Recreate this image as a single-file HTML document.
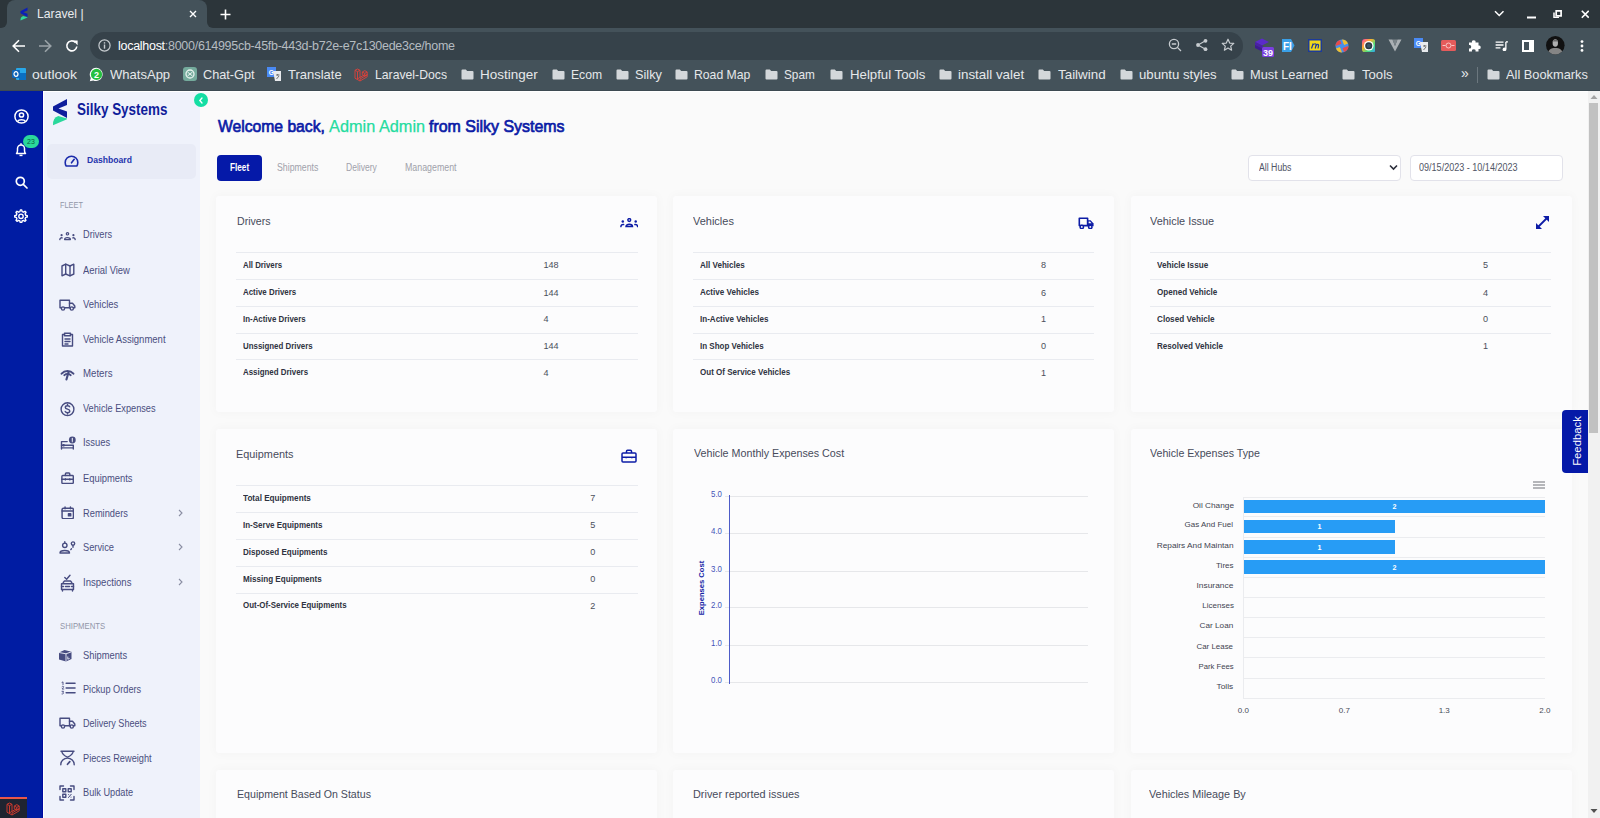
<!DOCTYPE html>
<html><head><meta charset="utf-8">
<style>
*{box-sizing:border-box;margin:0;padding:0}
html,body{width:1600px;height:818px;overflow:hidden;font-family:"Liberation Sans",sans-serif;background:#fafafa;position:relative}
.abs{position:absolute}
#tabs{position:absolute;left:0;top:0;width:1600px;height:28px;background:#2c353a}
#tab{position:absolute;left:7px;top:0;width:200px;height:28px;background:#44525a;border-radius:8px 8px 0 0}
#toolbar{position:absolute;left:0;top:28px;width:1600px;height:62px;background:#44525a}
#pill{position:absolute;left:90px;top:32px;width:1153px;height:28px;background:#36424a;border-radius:14px}
.ct{color:#e8eaed;font-size:13px;white-space:nowrap}
</style></head><body>
<div id="tabs"></div>
<div id="tab"></div><div class="abs" style="left:0;top:20px;width:215px;height:8px;background:#44525a"></div><div class="abs" style="left:0;top:0;width:7px;height:28px;background:#2c353a;border-bottom-right-radius:6px"></div><div class="abs" style="left:207px;top:0;width:10px;height:28px;background:#2c353a;border-bottom-left-radius:6px"></div><div id="tab2"></div>
<div id="toolbar"></div>
<div id="pill"></div>
<!-- tab content -->
<svg class="abs" style="left:19.5px;top:7px" width="8" height="14" viewBox="0 0 16 28"><path d="M15 1V7L6.5 10.5L15 13.6V20L1 12.4V8.6Z" fill="#0b1fb8"/><path d="M1 27.2Q0.6 20 6.3 18.1L15 20.6V21.2Z" fill="#2fd89d"/></svg>
<div class="abs ct" style="left:37px;top:6px;font-size:13px;color:#e8eaed;transform:scaleX(0.94);transform-origin:0 50%">Laravel |</div>
<svg class="abs" style="left:189px;top:10px" width="8" height="8" viewBox="0 0 8 8"><path d="M1 1L7 7M7 1L1 7" stroke="#fff" stroke-width="1.4"/></svg>
<svg class="abs" style="left:220px;top:9px" width="11" height="11" viewBox="0 0 11 11"><path d="M5.5 0.5V10.5M0.5 5.5H10.5" stroke="#fff" stroke-width="1.6"/></svg>
<!-- window controls -->
<svg class="abs" style="left:1494px;top:10px" width="10.5" height="7" viewBox="0 0 10.5 7"><path d="M1 1.2L5.25 5.5L9.5 1.2" stroke="#fff" stroke-width="1.5" fill="none"/></svg>
<svg class="abs" style="left:1526.5px;top:15.5px" width="9" height="3" viewBox="0 0 9 3"><path d="M0 1.5H9" stroke="#fff" stroke-width="2"/></svg>
<svg class="abs" style="left:1553px;top:9.8px" width="9" height="8.5" viewBox="0 0 9 8.5"><path d="M3.2 0.9H8.1V5.8H3.2Z" stroke="#fff" stroke-width="1.7" fill="#2c353a"/><path d="M1 2.5V7.5H6" stroke="#fff" stroke-width="1.5" fill="none"/></svg>
<svg class="abs" style="left:1580.5px;top:10px" width="8.5" height="8.5" viewBox="0 0 8.5 8.5"><path d="M0.8 0.8L7.7 7.7M7.7 0.8L0.8 7.7" stroke="#fff" stroke-width="1.6"/></svg>
<!-- nav -->
<svg class="abs" style="left:11.5px;top:39px" width="14" height="14" viewBox="0 0 14 14"><path d="M13 7H1.5M7 1.2L1.2 7L7 12.8" stroke="#fff" stroke-width="1.6" fill="none"/></svg>
<svg class="abs" style="left:37.5px;top:39px" width="14" height="14" viewBox="0 0 14 14"><path d="M1 7H12.5M7 1.2L12.8 7L7 12.8" stroke="#9aa3a8" stroke-width="1.6" fill="none"/></svg>
<svg class="abs" style="left:65px;top:39px" width="14" height="14" viewBox="0 0 14 14"><path d="M11.8 7.5A5 5 0 1 1 10.3 3.3" stroke="#fff" stroke-width="1.6" fill="none"/><path d="M8 1.5H12.6V6.2Z" fill="#fff"/></svg>
<svg class="abs" style="left:98px;top:39px" width="13" height="13" viewBox="0 0 13 13"><circle cx="6.5" cy="6.5" r="5.6" stroke="#c7ccd0" stroke-width="1.2" fill="none"/><rect x="5.8" y="5.5" width="1.4" height="4.2" fill="#c7ccd0"/><rect x="5.8" y="3.2" width="1.4" height="1.4" fill="#c7ccd0"/></svg>
<div class="abs ct" style="left:118px;top:38.5px;font-size:12.5px;letter-spacing:-0.28px"><span style="color:#fff">localhost</span><span style="color:#b5bcc1">:8000/614995cb-45fb-443d-b72e-e7c130ede3ce/home</span></div>
<!-- right of pill -->
<svg class="abs" style="left:1168px;top:38px" width="14" height="14" viewBox="0 0 14 14"><circle cx="6" cy="6" r="4.6" stroke="#c7ccd0" stroke-width="1.3" fill="none"/><path d="M3.8 6H8.2M9.4 9.4L13 13" stroke="#c7ccd0" stroke-width="1.3"/></svg>
<svg class="abs" style="left:1195px;top:38px" width="14" height="14" viewBox="0 0 14 14"><circle cx="10.5" cy="2.8" r="1.9" fill="#c7ccd0"/><circle cx="3" cy="7" r="1.9" fill="#c7ccd0"/><circle cx="10.5" cy="11.2" r="1.9" fill="#c7ccd0"/><path d="M10.5 2.8L3 7L10.5 11.2" stroke="#c7ccd0" stroke-width="1.1" fill="none"/></svg>
<svg class="abs" style="left:1221px;top:38px" width="14" height="14" viewBox="0 0 14 14"><path d="M7 1.2L8.7 5.1L12.8 5.4L9.7 8.1L10.6 12.2L7 10L3.4 12.2L4.3 8.1L1.2 5.4L5.3 5.1Z" stroke="#c7ccd0" stroke-width="1.2" fill="none" stroke-linejoin="round"/></svg>
<!-- extensions -->
<svg class="abs" style="left:1253px;top:36px" width="22" height="22" viewBox="0 0 22 22"><path d="M2 6L9 2.5L16 6L9 9.5Z" fill="#5b2bc9"/><path d="M2 9L9 12.5L10 12V10L2 6Z" fill="#4a1fa8"/><path d="M2 9V12L9 15.5V12.5Z" fill="#3d1a92"/><rect x="9" y="11" width="12" height="10" rx="1.5" fill="#7a3fe0"/><text x="15" y="19.5" font-size="9" fill="#fff" text-anchor="middle" font-family="Liberation Sans" font-weight="bold">39</text></svg>
<svg class="abs" style="left:1281px;top:38px" width="14" height="15" viewBox="0 0 14 15"><path d="M1 1H10L13.5 7.5L10 14H1Z" fill="#3aa0e8"/><text x="2" y="11.5" font-size="10" fill="#fff" font-family="Liberation Sans" font-weight="bold">FI</text></svg>
<svg class="abs" style="left:1308px;top:39px" width="14" height="13" viewBox="0 0 14 13"><rect x="0" y="0" width="14" height="13" fill="#1c3a9a"/><rect x="1.5" y="1.5" width="11" height="10" fill="#f2d91a"/><path d="M3.5 9.5L5.2 4.5M5 6C6 4.5 8.5 4 8 6.5L7.2 9.5M8.4 6.4C9 5 11 4.8 10.5 7L10 9.5" stroke="#1c3a9a" stroke-width="1.2" fill="none"/></svg>
<svg class="abs" style="left:1335px;top:38.5px" width="14" height="14" viewBox="0 0 14 14"><circle cx="7" cy="7" r="6.5" fill="#4a8ee8"/><path d="M7 0.5A6.5 6.5 0 0 1 13 4.5L9 6Z" fill="#f0c030"/><path d="M13.5 7A6.5 6.5 0 0 1 9 13L7.5 9Z" fill="#e84a4a"/><path d="M7 13.5A6.5 6.5 0 0 1 1 9.5L5 8Z" fill="#f0c030"/><path d="M0.5 7A6.5 6.5 0 0 1 5 1L6.5 5Z" fill="#e84a4a"/><circle cx="7" cy="7" r="2.2" fill="#4a8ee8"/></svg>
<svg class="abs" style="left:1361.5px;top:38.8px" width="13.5" height="13.5" viewBox="0 0 14 14"><defs><linearGradient id="rg" x1="0" y1="0" x2="1" y2="1"><stop offset="0" stop-color="#ff3fb0"/><stop offset="0.35" stop-color="#ffb02e"/><stop offset="0.65" stop-color="#4be07a"/><stop offset="1" stop-color="#2f9bff"/></linearGradient></defs><rect x="0" y="0" width="14" height="14" rx="3.5" fill="url(#rg)"/><circle cx="7" cy="7" r="5" fill="#fff"/><circle cx="7" cy="7" r="3.7" fill="#2d3a44"/><circle cx="7" cy="7" r="2" fill="#3c5566"/></svg>
<svg class="abs" style="left:1388px;top:39px" width="14" height="13" viewBox="0 0 14 13"><path d="M0.5 0.5H4.5L7 7L9.5 0.5H13.5L7 12.5Z" fill="#aab0b4"/><path d="M4.5 0.5L7 7L9.5 0.5" fill="#7c858a"/></svg>
<svg class="abs" style="left:1414px;top:38px" width="15" height="15" viewBox="0 0 15 15"><rect x="0" y="0" width="9" height="10" fill="#4a8af4"/><text x="1.8" y="7.5" font-size="6.5" fill="#fff" font-family="Liberation Sans" font-weight="bold">G</text><path d="M6 4H14V14H8Z" fill="#e8eaed"/><path d="M9 8H12.5M10.7 7V8.5M9.5 12L12 9" stroke="#555" stroke-width="0.8"/></svg>
<svg class="abs" style="left:1441px;top:40px" width="15" height="11" viewBox="0 0 15 11"><rect x="0" y="0" width="15" height="11" rx="1.5" fill="#e55b5b"/><circle cx="7.5" cy="5.5" r="2.5" stroke="#fbd0d0" stroke-width="0.9" fill="none"/><path d="M1.5 5.5H4.5M10.5 5.5H13.5" stroke="#fbd0d0" stroke-width="0.9"/></svg>
<svg class="abs" style="left:1468px;top:38px" width="14" height="14" viewBox="0 0 14 14"><path d="M1 4.5H4A1.8 1.8 0 1 1 7.5 4.5H10.5V7.5A1.8 1.8 0 1 1 10.5 11V13.5H7.5A1.8 1.8 0 1 0 4 13.5H1V10.5A1.8 1.8 0 1 0 1 7Z" fill="#fff"/></svg>
<svg class="abs" style="left:1495px;top:40.5px" width="13.5" height="10.5" viewBox="0 0 15 12"><path d="M0.5 1.3H9.5M0.5 4.6H9.5M0.5 7.9H6" stroke="#fff" stroke-width="1.6"/><path d="M12.2 1V9.5" stroke="#fff" stroke-width="1.5"/><path d="M12.2 1H14.5" stroke="#fff" stroke-width="1.6"/><circle cx="10.6" cy="9.6" r="2.1" fill="#fff"/></svg>
<svg class="abs" style="left:1522px;top:39.6px" width="12" height="12" viewBox="0 0 12 12"><rect x="1" y="1" width="10" height="10" stroke="#fff" stroke-width="2" fill="none"/><rect x="7" y="1" width="4" height="10" fill="#fff"/></svg>
<svg class="abs" style="left:1546px;top:36.2px" width="18.6" height="18.6" viewBox="0 0 20 20"><defs><clipPath id="avc"><circle cx="10" cy="10" r="10"/></clipPath></defs><circle cx="10" cy="10" r="10" fill="#111"/><g clip-path="url(#avc)"><path d="M1.5 21C2 14.5 5 12.8 10 12.8C15 12.8 18 14.5 18.5 21Z" fill="#858585"/><ellipse cx="10" cy="7.6" rx="2.9" ry="4" fill="#b0b0b0"/><path d="M7.1 6C7.3 3.2 12.7 3.2 12.9 6" fill="#6a6a6a"/></g></svg>
<svg class="abs" style="left:1580px;top:40px" width="4" height="12" viewBox="0 0 4 12"><circle cx="2" cy="1.6" r="1.4" fill="#fff"/><circle cx="2" cy="6" r="1.4" fill="#fff"/><circle cx="2" cy="10.4" r="1.4" fill="#fff"/></svg>
<!-- bookmarks -->
<svg class="abs" style="left:12px;top:67px" width="14" height="14" viewBox="0 0 14 14"><rect x="4" y="1" width="10" height="12" rx="1" fill="#28a8ea"/><rect x="7" y="6" width="7" height="7" fill="#0a6fc2"/><rect x="0" y="3" width="8" height="8" rx="1" fill="#0f64b8"/><ellipse cx="4" cy="7" rx="2" ry="2.3" stroke="#fff" stroke-width="1.2" fill="none"/></svg><svg class="abs" style="left:89px;top:67px" width="15" height="15" viewBox="0 0 15 15"><path d="M7.5 0.8A6.6 6.6 0 1 1 4.3 13.4L0.8 14.2L1.8 10.9A6.6 6.6 0 0 1 7.5 0.8Z" fill="#fff"/><circle cx="7.5" cy="7.4" r="5.6" fill="#25c040"/><text x="7.5" y="10.6" font-size="9" fill="#fff" text-anchor="middle" font-family="Liberation Sans" font-weight="bold">2</text></svg><svg class="abs" style="left:183px;top:67px" width="14" height="14" viewBox="0 0 14 14"><rect x="0" y="0" width="14" height="14" rx="3" fill="#74aa9c"/><circle cx="7" cy="7" r="4" stroke="#e8f3ef" stroke-width="1.3" fill="none"/><path d="M4.5 5L9.5 9M9.5 5L4.5 9" stroke="#e8f3ef" stroke-width="1"/></svg><svg class="abs" style="left:267px;top:67px" width="15" height="15" viewBox="0 0 15 15"><rect x="0" y="0" width="9" height="10" fill="#4a8af4"/><text x="1.8" y="7.5" font-size="6.5" fill="#fff" font-family="Liberation Sans" font-weight="bold">G</text><path d="M6 4H14V14H8Z" fill="#e8eaed"/><path d="M9 8H12.5M10.7 7V8.5M9.5 12L12 9" stroke="#555" stroke-width="0.8"/></svg><svg class="abs" style="left:354px;top:68px" width="14" height="14" viewBox="0 0 14 14"><g stroke="#e0413a" stroke-width="0.9" fill="none" stroke-linejoin="round"><path d="M1 2.3L3.5 1L6 2.3L3.5 3.6Z"/><path d="M1 2.3V10.2L6 13L13.2 8.8V6.2"/><path d="M3.5 3.6V11.6"/><path d="M6 2.3V9.4L3.5 10.8M6 9.4L10.8 6.6"/><path d="M8.3 4L10.8 2.6L13.2 4L10.8 5.4Z"/><path d="M8.3 4V6.7L10.8 8.1L13.2 6.7V4M10.8 5.4V8.1M6 13V11L13.2 6.8"/></g></svg><svg class="abs" style="left:461px;top:69px" width="13" height="11" viewBox="0 0 13 11"><path d="M0.5 1.5Q0.5 0.5 1.5 0.5H4.8L6.2 2H11.5Q12.5 2 12.5 3V9.5Q12.5 10.5 11.5 10.5H1.5Q0.5 10.5 0.5 9.5Z" fill="#d3d7da"/></svg><svg class="abs" style="left:552px;top:69px" width="13" height="11" viewBox="0 0 13 11"><path d="M0.5 1.5Q0.5 0.5 1.5 0.5H4.8L6.2 2H11.5Q12.5 2 12.5 3V9.5Q12.5 10.5 11.5 10.5H1.5Q0.5 10.5 0.5 9.5Z" fill="#d3d7da"/></svg><svg class="abs" style="left:616px;top:69px" width="13" height="11" viewBox="0 0 13 11"><path d="M0.5 1.5Q0.5 0.5 1.5 0.5H4.8L6.2 2H11.5Q12.5 2 12.5 3V9.5Q12.5 10.5 11.5 10.5H1.5Q0.5 10.5 0.5 9.5Z" fill="#d3d7da"/></svg><svg class="abs" style="left:675px;top:69px" width="13" height="11" viewBox="0 0 13 11"><path d="M0.5 1.5Q0.5 0.5 1.5 0.5H4.8L6.2 2H11.5Q12.5 2 12.5 3V9.5Q12.5 10.5 11.5 10.5H1.5Q0.5 10.5 0.5 9.5Z" fill="#d3d7da"/></svg><svg class="abs" style="left:765px;top:69px" width="13" height="11" viewBox="0 0 13 11"><path d="M0.5 1.5Q0.5 0.5 1.5 0.5H4.8L6.2 2H11.5Q12.5 2 12.5 3V9.5Q12.5 10.5 11.5 10.5H1.5Q0.5 10.5 0.5 9.5Z" fill="#d3d7da"/></svg><svg class="abs" style="left:830px;top:69px" width="13" height="11" viewBox="0 0 13 11"><path d="M0.5 1.5Q0.5 0.5 1.5 0.5H4.8L6.2 2H11.5Q12.5 2 12.5 3V9.5Q12.5 10.5 11.5 10.5H1.5Q0.5 10.5 0.5 9.5Z" fill="#d3d7da"/></svg><svg class="abs" style="left:939px;top:69px" width="13" height="11" viewBox="0 0 13 11"><path d="M0.5 1.5Q0.5 0.5 1.5 0.5H4.8L6.2 2H11.5Q12.5 2 12.5 3V9.5Q12.5 10.5 11.5 10.5H1.5Q0.5 10.5 0.5 9.5Z" fill="#d3d7da"/></svg><svg class="abs" style="left:1038px;top:69px" width="13" height="11" viewBox="0 0 13 11"><path d="M0.5 1.5Q0.5 0.5 1.5 0.5H4.8L6.2 2H11.5Q12.5 2 12.5 3V9.5Q12.5 10.5 11.5 10.5H1.5Q0.5 10.5 0.5 9.5Z" fill="#d3d7da"/></svg><svg class="abs" style="left:1120px;top:69px" width="13" height="11" viewBox="0 0 13 11"><path d="M0.5 1.5Q0.5 0.5 1.5 0.5H4.8L6.2 2H11.5Q12.5 2 12.5 3V9.5Q12.5 10.5 11.5 10.5H1.5Q0.5 10.5 0.5 9.5Z" fill="#d3d7da"/></svg><svg class="abs" style="left:1231px;top:69px" width="13" height="11" viewBox="0 0 13 11"><path d="M0.5 1.5Q0.5 0.5 1.5 0.5H4.8L6.2 2H11.5Q12.5 2 12.5 3V9.5Q12.5 10.5 11.5 10.5H1.5Q0.5 10.5 0.5 9.5Z" fill="#d3d7da"/></svg><svg class="abs" style="left:1342px;top:69px" width="13" height="11" viewBox="0 0 13 11"><path d="M0.5 1.5Q0.5 0.5 1.5 0.5H4.8L6.2 2H11.5Q12.5 2 12.5 3V9.5Q12.5 10.5 11.5 10.5H1.5Q0.5 10.5 0.5 9.5Z" fill="#d3d7da"/></svg><svg class="abs" style="left:1487px;top:69px" width="13" height="11" viewBox="0 0 13 11"><path d="M0.5 1.5Q0.5 0.5 1.5 0.5H4.8L6.2 2H11.5Q12.5 2 12.5 3V9.5Q12.5 10.5 11.5 10.5H1.5Q0.5 10.5 0.5 9.5Z" fill="#d3d7da"/></svg><div class="abs ct" style="left:1461px;top:65px;font-size:14px">&raquo;</div><div class="abs" style="left:1477px;top:67px;width:1px;height:16px;background:#6b777e"></div>

<div id="t0" style="position:absolute;left:32.00px;transform-origin:0 50%;top:69.17px;font-size:12.4px;line-height:12.4px;color:#e6e8ea;font-weight:normal;white-space:nowrap;transform:scaleX(1.1278);">outlook</div>
<div id="t1" style="position:absolute;left:110.00px;transform-origin:0 50%;top:69.17px;font-size:12.4px;line-height:12.4px;color:#e6e8ea;font-weight:normal;white-space:nowrap;transform:scaleX(1.0518);">WhatsApp</div>
<div id="t2" style="position:absolute;left:203.00px;transform-origin:0 50%;top:69.17px;font-size:12.4px;line-height:12.4px;color:#e6e8ea;font-weight:normal;white-space:nowrap;transform:scaleX(1.0265);">Chat-Gpt</div>
<div id="t3" style="position:absolute;left:287.50px;transform-origin:0 50%;top:69.17px;font-size:12.4px;line-height:12.4px;color:#e6e8ea;font-weight:normal;white-space:nowrap;transform:scaleX(1.0474);">Translate</div>
<div id="t4" style="position:absolute;left:374.60px;transform-origin:0 50%;top:69.17px;font-size:12.4px;line-height:12.4px;color:#e6e8ea;font-weight:normal;white-space:nowrap;transform:scaleX(0.9862);">Laravel-Docs</div>
<div id="t5" style="position:absolute;left:480.00px;transform-origin:0 50%;top:69.17px;font-size:12.4px;line-height:12.4px;color:#e6e8ea;font-weight:normal;white-space:nowrap;transform:scaleX(1.0871);">Hostinger</div>
<div id="t6" style="position:absolute;left:570.75px;transform-origin:0 50%;top:69.17px;font-size:12.4px;line-height:12.4px;color:#e6e8ea;font-weight:normal;white-space:nowrap;transform:scaleX(0.9811);">Ecom</div>
<div id="t7" style="position:absolute;left:635.00px;transform-origin:0 50%;top:69.17px;font-size:12.4px;line-height:12.4px;color:#e6e8ea;font-weight:normal;white-space:nowrap;transform:scaleX(1.0265);">Silky</div>
<div id="t8" style="position:absolute;left:694.25px;transform-origin:0 50%;top:69.17px;font-size:12.4px;line-height:12.4px;color:#e6e8ea;font-weight:normal;white-space:nowrap;transform:scaleX(0.9855);">Road Map</div>
<div id="t9" style="position:absolute;left:783.75px;transform-origin:0 50%;top:69.17px;font-size:12.4px;line-height:12.4px;color:#e6e8ea;font-weight:normal;white-space:nowrap;transform:scaleX(0.9520);">Spam</div>
<div id="t10" style="position:absolute;left:849.50px;transform-origin:0 50%;top:69.17px;font-size:12.4px;line-height:12.4px;color:#e6e8ea;font-weight:normal;white-space:nowrap;transform:scaleX(1.0660);">Helpful Tools</div>
<div id="t11" style="position:absolute;left:958.25px;transform-origin:0 50%;top:69.17px;font-size:12.4px;line-height:12.4px;color:#e6e8ea;font-weight:normal;white-space:nowrap;transform:scaleX(1.0791);">install valet</div>
<div id="t12" style="position:absolute;left:1058.00px;transform-origin:0 50%;top:69.17px;font-size:12.4px;line-height:12.4px;color:#e6e8ea;font-weight:normal;white-space:nowrap;transform:scaleX(1.0810);">Tailwind</div>
<div id="t13" style="position:absolute;left:1139.25px;transform-origin:0 50%;top:69.17px;font-size:12.4px;line-height:12.4px;color:#e6e8ea;font-weight:normal;white-space:nowrap;transform:scaleX(1.0633);">ubuntu styles</div>
<div id="t14" style="position:absolute;left:1250.00px;transform-origin:0 50%;top:69.17px;font-size:12.4px;line-height:12.4px;color:#e6e8ea;font-weight:normal;white-space:nowrap;transform:scaleX(1.0311);">Must Learned</div>
<div id="t15" style="position:absolute;left:1362.00px;transform-origin:0 50%;top:69.17px;font-size:12.4px;line-height:12.4px;color:#e6e8ea;font-weight:normal;white-space:nowrap;transform:scaleX(1.0587);">Tools</div>
<div id="t16" style="position:absolute;left:1506.25px;transform-origin:0 50%;top:69.17px;font-size:12.4px;line-height:12.4px;color:#e6e8ea;font-weight:normal;white-space:nowrap;transform:scaleX(1.0339);">All Bookmarks</div>
<div style="position:absolute;left:0;top:90px;width:1600px;height:1px;background:#3d4a52"></div>
<div style="position:absolute;left:0;top:91px;width:1600px;height:727px;background:#fafafa"></div>
<div style="position:absolute;left:0;top:91px;width:1600px;height:1px;background:#ffffff"></div>
<div style="position:absolute;left:0;top:91px;width:42.5px;height:727px;background:#001ca3;border-right:1px solid #0009a0"></div>
<div style="position:absolute;left:42.5px;top:91px;width:0.5px;height:727px;background:#8f97dc"></div>
<div style="position:absolute;left:43px;top:91px;width:1.2px;height:727px;background:#ffffff"></div>
<div style="position:absolute;left:44px;top:92px;width:156px;height:726px;background:#eff2fb"></div>
<svg style="position:absolute;left:14px;top:109px" width="15" height="15" viewBox="0 0 15 15" fill="none" stroke="#ffffff" stroke-width="1.5"><circle cx="7.5" cy="7.5" r="6.6"/><circle cx="7.5" cy="6" r="2.1"/><path d="M3.6 12.3C4.8 10.2 10.2 10.2 11.4 12.3"/></svg>
<svg style="position:absolute;left:14px;top:142px" width="14" height="15" viewBox="0 0 14 15" fill="none" stroke="#ffffff" stroke-width="1.5" stroke-linejoin="round"><path d="M7 1.2V2.3M2.5 11.5H11.5C10.6 10.6 10.5 9.5 10.5 8.5V6.5A3.5 3.5 0 0 0 3.5 6.5V8.5C3.5 9.5 3.4 10.6 2.5 11.5Z"/><path d="M5.5 13.4H8.5"/></svg>
<div style="position:absolute;left:23px;top:135px;width:16px;height:13px;border-radius:7px;background:#2ad89b"></div>
<div id="t17" style="position:absolute;left:-69.00px;width:200px;text-align:center;top:137.98px;font-size:7px;line-height:7px;color:#0c5c42;font-weight:normal;white-space:nowrap;">23</div>
<svg style="position:absolute;left:15px;top:176px" width="13" height="13" viewBox="0 0 13 13" fill="none" stroke="#ffffff" stroke-width="1.7" stroke-linecap="round"><circle cx="5.3" cy="5.3" r="4"/><path d="M8.3 8.3L12 12"/></svg>
<svg style="position:absolute;left:14px;top:209px" width="14" height="14" viewBox="0 0 14 14" fill="none" stroke="#ffffff" stroke-width="1.4" stroke-linejoin="round"><path d="M7 0.9L8.3 0.9L8.7 2.6L10.1 3.2L11.6 2.3L12.6 3.3L11.7 4.8L12.3 6.2L13.9 6.6V8L12.3 8.4L11.7 9.8L12.6 11.3L11.6 12.3L10.1 11.4L8.7 12L8.3 13.6H6.9L6.5 12L5.1 11.4L3.6 12.3L2.6 11.3L3.5 9.8L2.9 8.4L1.3 8V6.6L2.9 6.2L3.5 4.8L2.6 3.3L3.6 2.3L5.1 3.2L6.5 2.6Z" transform="translate(-0.6 0)"/><circle cx="7" cy="7.3" r="2.2"/></svg>
<div style="position:absolute;left:0;top:796.5px;width:27px;height:22px;background:#1f2430;border-top:2px solid #e8574b"></div>
<svg style="position:absolute;left:6px;top:801.5px" width="14" height="14" viewBox="0 0 14 14"><g stroke="#c8392e" stroke-width="1" fill="none" stroke-linejoin="round"><path d="M1 2.3L3.5 1L6 2.3L3.5 3.6Z"/><path d="M1 2.3V10.2L6 13L13.2 8.8V6.2"/><path d="M3.5 3.6V11.6"/><path d="M6 2.3V9.4L3.5 10.8M6 9.4L10.8 6.6"/><path d="M8.3 4L10.8 2.6L13.2 4L10.8 5.4Z"/><path d="M8.3 4V6.7L10.8 8.1L13.2 6.7V4M10.8 5.4V8.1M6 13V11L13.2 6.8"/></g></svg>
<svg style="position:absolute;left:52px;top:98px" width="16" height="28" viewBox="0 0 16 28"><path d="M15 1V7L6.5 10.5L15 13.6V20L1 12.4V8.6Z" fill="#0e1e9c"/><path d="M1 27.2Q0.6 20 6.3 18.1L15 20.6V21.2Z" fill="#2ad89b"/></svg>
<div id="t18" style="position:absolute;left:77.40px;transform-origin:0 50%;top:100.66px;font-size:16.4px;line-height:16.4px;color:#0f1d9a;font-weight:bold;white-space:nowrap;transform:scaleX(0.8207);">Silky Systems</div>
<div style="position:absolute;left:194px;top:93.3px;width:13.8px;height:13.8px;border-radius:7px;background:#14dea3"></div>
<svg style="position:absolute;left:198px;top:97px" width="6" height="7" viewBox="0 0 6 7"><path d="M4 1L1.8 3.5L4 6" stroke="#fff" stroke-width="1.3" fill="none" stroke-linecap="round"/></svg>
<div style="position:absolute;left:47px;top:144px;width:149px;height:35px;border-radius:5px;background:#e8ebf6"></div>
<svg style="position:absolute;left:64px;top:154px" width="15" height="13" viewBox="0 0 15 13" fill="none" stroke="#1b2bab" stroke-width="1.6" stroke-linecap="round"><path d="M2.2 12H12.8C13.5 11 13.8 9.8 13.8 8.5A6.3 6.3 0 0 0 1.2 8.5C1.2 9.8 1.5 11 2.2 12Z"/><path d="M7.5 8.8L10.2 5.3"/></svg>
<div id="t19" style="position:absolute;left:87.40px;transform-origin:0 50%;top:155.03px;font-size:9.7px;line-height:9.7px;color:#2534ad;font-weight:bold;white-space:nowrap;transform:scaleX(0.8878);">Dashboard</div>
<div id="t20" style="position:absolute;left:59.50px;transform-origin:0 50%;top:200.83px;font-size:8.9px;line-height:8.9px;color:#9196a8;font-weight:normal;white-space:nowrap;transform:scaleX(0.8289);">FLEET</div>
<div id="t21" style="position:absolute;left:59.60px;transform-origin:0 50%;top:621.63px;font-size:8.9px;line-height:8.9px;color:#9196a8;font-weight:normal;white-space:nowrap;transform:scaleX(0.8714);">SHIPMENTS</div>
<div id="t22" style="position:absolute;left:82.80px;transform-origin:0 50%;top:230.47px;font-size:10.2px;line-height:10.2px;color:#4a4e7e;font-weight:normal;white-space:nowrap;transform:scaleX(0.9032);">Drivers</div>
<div id="t23" style="position:absolute;left:82.80px;transform-origin:0 50%;top:265.67px;font-size:10.2px;line-height:10.2px;color:#4a4e7e;font-weight:normal;white-space:nowrap;transform:scaleX(0.9227);">Aerial View</div>
<div id="t24" style="position:absolute;left:82.80px;transform-origin:0 50%;top:299.97px;font-size:10.2px;line-height:10.2px;color:#4a4e7e;font-weight:normal;white-space:nowrap;transform:scaleX(0.9316);">Vehicles</div>
<div id="t25" style="position:absolute;left:82.80px;transform-origin:0 50%;top:334.57px;font-size:10.2px;line-height:10.2px;color:#4a4e7e;font-weight:normal;white-space:nowrap;transform:scaleX(0.9345);">Vehicle Assignment</div>
<div id="t26" style="position:absolute;left:82.80px;transform-origin:0 50%;top:368.87px;font-size:10.2px;line-height:10.2px;color:#4a4e7e;font-weight:normal;white-space:nowrap;transform:scaleX(0.9463);">Meters</div>
<div id="t27" style="position:absolute;left:82.80px;transform-origin:0 50%;top:403.97px;font-size:10.2px;line-height:10.2px;color:#4a4e7e;font-weight:normal;white-space:nowrap;transform:scaleX(0.9020);">Vehicle Expenses</div>
<div id="t28" style="position:absolute;left:82.80px;transform-origin:0 50%;top:437.97px;font-size:10.2px;line-height:10.2px;color:#4a4e7e;font-weight:normal;white-space:nowrap;transform:scaleX(0.9254);">Issues</div>
<div id="t29" style="position:absolute;left:82.80px;transform-origin:0 50%;top:473.57px;font-size:10.2px;line-height:10.2px;color:#4a4e7e;font-weight:normal;white-space:nowrap;transform:scaleX(0.9208);">Equipments</div>
<div id="t30" style="position:absolute;left:82.80px;transform-origin:0 50%;top:508.57px;font-size:10.2px;line-height:10.2px;color:#4a4e7e;font-weight:normal;white-space:nowrap;transform:scaleX(0.9123);">Reminders</div>
<div id="t31" style="position:absolute;left:82.80px;transform-origin:0 50%;top:542.67px;font-size:10.2px;line-height:10.2px;color:#4a4e7e;font-weight:normal;white-space:nowrap;transform:scaleX(0.9106);">Service</div>
<div id="t32" style="position:absolute;left:82.80px;transform-origin:0 50%;top:577.57px;font-size:10.2px;line-height:10.2px;color:#4a4e7e;font-weight:normal;white-space:nowrap;transform:scaleX(0.9402);">Inspections</div>
<div id="t33" style="position:absolute;left:82.80px;transform-origin:0 50%;top:650.67px;font-size:10.2px;line-height:10.2px;color:#4a4e7e;font-weight:normal;white-space:nowrap;transform:scaleX(0.9171);">Shipments</div>
<div id="t34" style="position:absolute;left:82.80px;transform-origin:0 50%;top:684.97px;font-size:10.2px;line-height:10.2px;color:#4a4e7e;font-weight:normal;white-space:nowrap;transform:scaleX(0.9007);">Pickup Orders</div>
<div id="t35" style="position:absolute;left:82.80px;transform-origin:0 50%;top:719.17px;font-size:10.2px;line-height:10.2px;color:#4a4e7e;font-weight:normal;white-space:nowrap;transform:scaleX(0.8920);">Delivery Sheets</div>
<div id="t36" style="position:absolute;left:82.80px;transform-origin:0 50%;top:753.97px;font-size:10.2px;line-height:10.2px;color:#4a4e7e;font-weight:normal;white-space:nowrap;transform:scaleX(0.9045);">Pieces Reweight</div>
<div id="t37" style="position:absolute;left:82.80px;transform-origin:0 50%;top:788.37px;font-size:10.2px;line-height:10.2px;color:#4a4e7e;font-weight:normal;white-space:nowrap;transform:scaleX(0.9016);">Bulk Update</div>
<svg style="position:absolute;left:178px;top:508.9px" width="5" height="8" viewBox="0 0 5 8"><path d="M1 1L4 4L1 7" stroke="#8a8ea3" stroke-width="1.1" fill="none"/></svg>
<svg style="position:absolute;left:178px;top:543.0px" width="5" height="8" viewBox="0 0 5 8"><path d="M1 1L4 4L1 7" stroke="#8a8ea3" stroke-width="1.1" fill="none"/></svg>
<svg style="position:absolute;left:178px;top:577.9px" width="5" height="8" viewBox="0 0 5 8"><path d="M1 1L4 4L1 7" stroke="#8a8ea3" stroke-width="1.1" fill="none"/></svg>
<svg style="position:absolute;left:59px;top:232px" width="17.00" height="8.50" viewBox="0 0 17 8.5" fill="none" stroke="#474c80" stroke-width="1.4" stroke-linecap="round" stroke-linejoin="round"><circle cx="8.5" cy="1.8" r="1.2" stroke-width="1.2"/><path d="M5.6 7.6C5.6 5 11.4 5 11.4 7.6Z" stroke-width="1.3"/><circle cx="2.6" cy="3.2" r="1.1" fill="#474c80" stroke="none"/><circle cx="14.4" cy="3.2" r="1.1" fill="#474c80" stroke="none"/><path d="M0.8 7.6C0.9 6.3 1.7 5.6 3.2 5.8M16.2 7.6C16.1 6.3 15.3 5.6 13.8 5.8" stroke-width="1.3"/></svg>
<svg style="position:absolute;left:61px;top:263px" width="14.00" height="14.00" viewBox="0 0 14 14" fill="none" stroke="#474c80" stroke-width="1.4" stroke-linecap="round" stroke-linejoin="round"><path d="M1 3L4.7 1.2L9 3L12.8 1.2V11L9 12.8L4.7 11L1 12.8Z"/><path d="M4.7 1.2V11M9 3V12.8"/></svg>
<svg style="position:absolute;left:59px;top:299px" width="17.00" height="12.00" viewBox="0 0 17 12" fill="none" stroke="#474c80" stroke-width="1.4" stroke-linecap="round" stroke-linejoin="round"><path d="M1 1.2H10.5V8.8H1Z"/><path d="M10.5 4.2H13.5L15.8 7V8.8H10.5"/><circle cx="4" cy="9.5" r="1.6" fill="#eff2fb"/><circle cx="12.8" cy="9.5" r="1.6" fill="#eff2fb"/></svg>
<svg style="position:absolute;left:60px;top:332px" width="15.00" height="15.00" viewBox="0 0 15 15" fill="none" stroke="#474c80" stroke-width="1.4" stroke-linecap="round" stroke-linejoin="round"><path d="M4.5 2.5H2.5V14H12.5V2.5H10.5"/><path d="M4.5 1.2H10.5V3.8H4.5Z"/><path d="M5 7H10M5 9.5H10M5 12H8"/></svg>
<svg style="position:absolute;left:60px;top:368.5px" width="15" height="12" viewBox="0 0 17 13.5" fill="none" stroke="#474c80" stroke-linecap="round"><path d="M1.8 5.2C5.5 1.2 11.5 1.2 15.2 5.2" stroke-width="2.3"/><path d="M4.8 7C7 5.3 10 5.3 12.2 7" stroke-width="2"/><path d="M9.6 3.8L7.3 11.8" stroke-width="2.4"/></svg>
<svg style="position:absolute;left:60px;top:401px" width="15.00" height="16.00" viewBox="0 0 15 16" fill="none" stroke="#474c80" stroke-width="1.4" stroke-linecap="round" stroke-linejoin="round"><circle cx="7.5" cy="8.2" r="6.4"/><path d="M9.7 5.8C9.3 5 8.5 4.7 7.5 4.7C6.3 4.7 5.3 5.4 5.3 6.4C5.3 8.7 9.8 7.7 9.8 10C9.8 11 8.8 11.7 7.5 11.7C6.4 11.7 5.6 11.3 5.2 10.5M7.5 3.3V4.7M7.5 11.7V13.1"/></svg>
<svg style="position:absolute;left:60px;top:435.5px" width="16.00" height="14.00" viewBox="0 0 16 14" fill="none" stroke="#474c80" stroke-width="1.4" stroke-linecap="round" stroke-linejoin="round"><path d="M1.5 13V5.6H7.2"/><path d="M1.5 9.3H13.3V13M1.5 11.9H13.3"/><circle cx="12.3" cy="4" r="3.4" fill="#474c80" stroke="none"/><path d="M12.3 2.3V4.4M12.3 5.6V5.7" stroke="#eff2fb" stroke-width="1.1"/><circle cx="3.6" cy="9.3" r="0.6" fill="#474c80"/></svg>
<svg style="position:absolute;left:60.5px;top:472px" width="13.20" height="12.32" viewBox="0 0 15 14" fill="none" stroke="#474c80" stroke-width="1.6" stroke-linecap="round" stroke-linejoin="round"><rect x="1" y="4" width="13" height="9" rx="1"/><path d="M5 4V2.2C5 1.5 5.5 1.2 6 1.2H9C9.5 1.2 10 1.5 10 2.2V4M1 8.3H14M5 7.5V9M10 7.5V9"/></svg>
<svg style="position:absolute;left:60.5px;top:505.5px" width="13.50" height="13.50" viewBox="0 0 15 15" fill="none" stroke="#474c80" stroke-width="1.6" stroke-linecap="round" stroke-linejoin="round"><rect x="1.2" y="2.5" width="12.6" height="11.5" rx="1.5"/><path d="M1.2 5.5H13.8M4.5 1V3M10.5 1V3"/><rect x="8.3" y="8.5" width="2.5" height="2.5" fill="#474c80"/></svg>
<svg style="position:absolute;left:59px;top:541px" width="17.00" height="13.00" viewBox="0 0 17 13" fill="none" stroke="#474c80" stroke-width="1.4" stroke-linecap="round" stroke-linejoin="round"><circle cx="5.8" cy="4.3" r="2.2"/><path d="M5.8 0.8V2.1" /><path d="M1 12C1 8.7 10.5 8.7 10.5 12Z"/><circle cx="14" cy="2.6" r="1.7"/><path d="M14 4.4V6.2M12.5 7.8L11.8 8.6"/></svg>
<svg style="position:absolute;left:60px;top:574px" width="15.00" height="18.00" viewBox="0 0 15 18" fill="none" stroke="#474c80" stroke-width="1.4" stroke-linecap="round" stroke-linejoin="round"><path d="M4.8 3.6L6.6 5.3L10 1.3"/><path d="M3.2 8.5L4.5 7H10.5L11.8 8.5"/><path d="M1.5 9.8H13.5V15.5H1.5Z"/><path d="M1.5 12.5H3.5M11.5 12.5H13.5M5.5 12.5H9.5M2.5 15.5V17M12.5 15.5V17"/></svg>
<svg style="position:absolute;left:58px;top:649px" width="15" height="13" viewBox="0 0 15 13"><path d="M1 3.5L6.5 1L13.5 2.8V10L8 12.5L1 10.5Z" fill="#474c80"/><path d="M8 4.8V12.5M1 3.5L8 4.8L13.5 2.8M9.8 7.5V10.2L11.6 9.4" stroke="#eff2fb" stroke-width="0.9" fill="none"/></svg>
<svg style="position:absolute;left:60.5px;top:681px" width="15.00" height="14.00" viewBox="0 0 15 14" fill="none" stroke="#474c80" stroke-width="1.4" stroke-linecap="round" stroke-linejoin="round"><path d="M5.2 2.3H14M5.2 7H14M5.2 11.7H14" stroke-width="1.6"/><path d="M1 1.4L2 0.9V3.6M1 5.6C1.5 5 2.7 5.2 2.7 5.9C2.7 6.6 1 7.5 1 8H2.8M1 10.3H2.5L1.8 11.3C2.9 11.3 2.9 13.3 1 13" stroke-width="0.9"/></svg>
<svg style="position:absolute;left:59px;top:717px" width="17.00" height="12.00" viewBox="0 0 17 12" fill="none" stroke="#474c80" stroke-width="1.4" stroke-linecap="round" stroke-linejoin="round"><path d="M1 1.2H10.5V8.8H1Z"/><path d="M10.5 4.2H13.5L15.8 7V8.8H10.5"/><circle cx="4" cy="9.5" r="1.6" fill="#eff2fb"/><circle cx="12.8" cy="9.5" r="1.6" fill="#eff2fb"/></svg>
<svg style="position:absolute;left:59px;top:750px" width="17.00" height="16.00" viewBox="0 0 17 16" fill="none" stroke="#474c80" stroke-width="1.4" stroke-linecap="round" stroke-linejoin="round"><path d="M2 1.2H15M2.8 1.2C3 4.6 6 6 8.5 7.2C11 6 14 4.6 14.2 1.2"/><path d="M1.8 14.8A6.7 6.7 0 0 1 15.2 14.8"/><path d="M8.5 14.3L10.8 11.6" stroke-width="1.7"/></svg>
<svg style="position:absolute;left:59px;top:785px" width="16.00" height="16.00" viewBox="0 0 16 16" fill="none" stroke="#474c80" stroke-width="1.4" stroke-linecap="round" stroke-linejoin="round"><path d="M1 4.5V1H4.5M11.5 1H15V4.5M15 11.5V15H11.5M4.5 15H1V11.5"/><rect x="3.8" y="3.8" width="3" height="3"/><rect x="9.2" y="3.8" width="3" height="3"/><rect x="3.8" y="9.2" width="3" height="3"/><path d="M9.5 12.5L12.2 9.3M9.6 9.6V9.7M12 12.1V12.2" stroke-width="1"/></svg>
<div id="t38" style="position:absolute;left:218.00px;transform-origin:0 50%;top:118.46px;font-size:17px;line-height:17px;color:#0b1ba6;font-weight:normal;white-space:nowrap;transform:scaleX(0.9219);-webkit-text-stroke:0.7px #0b1ba6;">Welcome back,</div>
<div id="t39" style="position:absolute;left:328.60px;transform-origin:0 50%;top:118.46px;font-size:17px;line-height:17px;color:#25dca0;font-weight:normal;white-space:nowrap;transform:scaleX(0.9601);-webkit-text-stroke:0.25px #25dca0;">Admin Admin</div>
<div id="t40" style="position:absolute;left:429.40px;transform-origin:0 50%;top:118.46px;font-size:17px;line-height:17px;color:#0b1ba6;font-weight:normal;white-space:nowrap;transform:scaleX(0.9379);-webkit-text-stroke:0.7px #0b1ba6;">from Silky Systems</div>
<div style="position:absolute;left:217px;top:155px;width:45px;height:25.5px;border-radius:4px;background:#0519a8"></div>
<div id="t41" style="position:absolute;left:230.30px;transform-origin:0 50%;top:162.77px;font-size:10.4px;line-height:10.4px;color:#ffffff;font-weight:bold;white-space:nowrap;transform:scaleX(0.7902);">Fleet</div>
<div id="t42" style="position:absolute;left:277.10px;transform-origin:0 50%;top:162.77px;font-size:10.4px;line-height:10.4px;color:#a0a1aa;font-weight:normal;white-space:nowrap;transform:scaleX(0.8434);">Shipments</div>
<div id="t43" style="position:absolute;left:346.20px;transform-origin:0 50%;top:162.77px;font-size:10.4px;line-height:10.4px;color:#a0a1aa;font-weight:normal;white-space:nowrap;transform:scaleX(0.8232);">Delivery</div>
<div id="t44" style="position:absolute;left:404.70px;transform-origin:0 50%;top:162.77px;font-size:10.4px;line-height:10.4px;color:#a0a1aa;font-weight:normal;white-space:nowrap;transform:scaleX(0.8492);">Management</div>
<div style="position:absolute;left:1247.5px;top:155px;width:153px;height:25.5px;border-radius:4px;background:#fff;border:1px solid #e2e2ea"></div>
<div id="t45" style="position:absolute;left:1259.10px;transform-origin:0 50%;top:163.38px;font-size:10px;line-height:10px;color:#515666;font-weight:normal;white-space:nowrap;transform:scaleX(0.8704);">All Hubs</div>
<svg style="position:absolute;left:1389px;top:164px" width="9" height="7" viewBox="0 0 9 7"><path d="M1 1.5L4.5 5L8 1.5" stroke="#2b2e3a" stroke-width="1.6" fill="none"/></svg>
<div style="position:absolute;left:1409.5px;top:155px;width:153px;height:25.5px;border-radius:4px;background:#fff;border:1px solid #e2e2ea"></div>
<div id="t46" style="position:absolute;left:1418.90px;transform-origin:0 50%;top:163.38px;font-size:10px;line-height:10px;color:#515666;font-weight:normal;white-space:nowrap;transform:scaleX(0.9042);">09/15/2023 - 10/14/2023</div>
<div style="position:absolute;left:216px;top:196px;width:441px;height:216px;background:#fcfcfd;border-radius:3px;box-shadow:0 0 10px 2px rgba(20,20,60,0.025)"></div>
<div style="position:absolute;left:216px;top:428.5px;width:441px;height:324px;background:#fcfcfd;border-radius:3px;box-shadow:0 0 10px 2px rgba(20,20,60,0.025)"></div>
<div style="position:absolute;left:216px;top:770px;width:441px;height:100px;background:#fcfcfd;border-radius:3px;box-shadow:0 0 10px 2px rgba(20,20,60,0.025)"></div>
<div style="position:absolute;left:673px;top:196px;width:441px;height:216px;background:#fcfcfd;border-radius:3px;box-shadow:0 0 10px 2px rgba(20,20,60,0.025)"></div>
<div style="position:absolute;left:673px;top:428.5px;width:441px;height:324px;background:#fcfcfd;border-radius:3px;box-shadow:0 0 10px 2px rgba(20,20,60,0.025)"></div>
<div style="position:absolute;left:673px;top:770px;width:441px;height:100px;background:#fcfcfd;border-radius:3px;box-shadow:0 0 10px 2px rgba(20,20,60,0.025)"></div>
<div style="position:absolute;left:1130.5px;top:196px;width:441px;height:216px;background:#fcfcfd;border-radius:3px;box-shadow:0 0 10px 2px rgba(20,20,60,0.025)"></div>
<div style="position:absolute;left:1130.5px;top:428.5px;width:441px;height:324px;background:#fcfcfd;border-radius:3px;box-shadow:0 0 10px 2px rgba(20,20,60,0.025)"></div>
<div style="position:absolute;left:1130.5px;top:770px;width:441px;height:100px;background:#fcfcfd;border-radius:3px;box-shadow:0 0 10px 2px rgba(20,20,60,0.025)"></div>
<div id="t47" style="position:absolute;left:236.60px;transform-origin:0 50%;top:215.07px;font-size:11.6px;line-height:11.6px;color:#474b5b;font-weight:normal;white-space:nowrap;transform:scaleX(0.9137);">Drivers</div>
<div style="position:absolute;left:236px;top:252.4px;width:402px;height:1px;background:#e9ebf0"></div>
<div style="position:absolute;left:236px;top:279.1px;width:402px;height:1px;background:#e9ebf0"></div>
<div style="position:absolute;left:236px;top:305.9px;width:402px;height:1px;background:#e9ebf0"></div>
<div style="position:absolute;left:236px;top:332.5px;width:402px;height:1px;background:#e9ebf0"></div>
<div style="position:absolute;left:236px;top:359.3px;width:402px;height:1px;background:#e9ebf0"></div>
<div id="t48" style="position:absolute;left:243.00px;transform-origin:0 50%;top:259.93px;font-size:9.9px;line-height:9.9px;color:#2f3341;font-weight:bold;white-space:nowrap;transform:scaleX(0.7909);">All Drivers</div>
<div id="t49" style="position:absolute;left:543.50px;transform-origin:0 50%;top:261.13px;font-size:9.1px;line-height:9.1px;color:#4b4f5b;font-weight:normal;white-space:nowrap;">148</div>
<div id="t50" style="position:absolute;left:243.00px;transform-origin:0 50%;top:287.43px;font-size:9.9px;line-height:9.9px;color:#2f3341;font-weight:bold;white-space:nowrap;transform:scaleX(0.8006);">Active Drivers</div>
<div id="t51" style="position:absolute;left:543.50px;transform-origin:0 50%;top:288.63px;font-size:9.1px;line-height:9.1px;color:#4b4f5b;font-weight:normal;white-space:nowrap;">144</div>
<div id="t52" style="position:absolute;left:243.00px;transform-origin:0 50%;top:313.83px;font-size:9.9px;line-height:9.9px;color:#2f3341;font-weight:bold;white-space:nowrap;transform:scaleX(0.7986);">In-Active Drivers</div>
<div id="t53" style="position:absolute;left:543.50px;transform-origin:0 50%;top:315.03px;font-size:9.1px;line-height:9.1px;color:#4b4f5b;font-weight:normal;white-space:nowrap;">4</div>
<div id="t54" style="position:absolute;left:243.00px;transform-origin:0 50%;top:340.53px;font-size:9.9px;line-height:9.9px;color:#2f3341;font-weight:bold;white-space:nowrap;transform:scaleX(0.7985);">Unssigned Drivers</div>
<div id="t55" style="position:absolute;left:543.50px;transform-origin:0 50%;top:341.73px;font-size:9.1px;line-height:9.1px;color:#4b4f5b;font-weight:normal;white-space:nowrap;">144</div>
<div id="t56" style="position:absolute;left:243.00px;transform-origin:0 50%;top:367.33px;font-size:9.9px;line-height:9.9px;color:#2f3341;font-weight:bold;white-space:nowrap;transform:scaleX(0.8011);">Assigned Drivers</div>
<div id="t57" style="position:absolute;left:543.50px;transform-origin:0 50%;top:368.53px;font-size:9.1px;line-height:9.1px;color:#4b4f5b;font-weight:normal;white-space:nowrap;">4</div>
<div id="t58" style="position:absolute;left:693.10px;transform-origin:0 50%;top:215.07px;font-size:11.6px;line-height:11.6px;color:#474b5b;font-weight:normal;white-space:nowrap;transform:scaleX(0.9463);">Vehicles</div>
<div style="position:absolute;left:693px;top:252.4px;width:401px;height:1px;background:#e9ebf0"></div>
<div style="position:absolute;left:693px;top:279.1px;width:401px;height:1px;background:#e9ebf0"></div>
<div style="position:absolute;left:693px;top:305.9px;width:401px;height:1px;background:#e9ebf0"></div>
<div style="position:absolute;left:693px;top:332.5px;width:401px;height:1px;background:#e9ebf0"></div>
<div style="position:absolute;left:693px;top:359.3px;width:401px;height:1px;background:#e9ebf0"></div>
<div id="t59" style="position:absolute;left:699.70px;transform-origin:0 50%;top:259.93px;font-size:9.9px;line-height:9.9px;color:#2f3341;font-weight:bold;white-space:nowrap;transform:scaleX(0.8160);">All Vehicles</div>
<div id="t60" style="position:absolute;left:1041.00px;transform-origin:0 50%;top:261.13px;font-size:9.1px;line-height:9.1px;color:#4b4f5b;font-weight:normal;white-space:nowrap;">8</div>
<div id="t61" style="position:absolute;left:699.70px;transform-origin:0 50%;top:287.43px;font-size:9.9px;line-height:9.9px;color:#2f3341;font-weight:bold;white-space:nowrap;transform:scaleX(0.8188);">Active Vehicles</div>
<div id="t62" style="position:absolute;left:1041.00px;transform-origin:0 50%;top:288.63px;font-size:9.1px;line-height:9.1px;color:#4b4f5b;font-weight:normal;white-space:nowrap;">6</div>
<div id="t63" style="position:absolute;left:699.70px;transform-origin:0 50%;top:313.83px;font-size:9.9px;line-height:9.9px;color:#2f3341;font-weight:bold;white-space:nowrap;transform:scaleX(0.8143);">In-Active Vehicles</div>
<div id="t64" style="position:absolute;left:1041.00px;transform-origin:0 50%;top:315.03px;font-size:9.1px;line-height:9.1px;color:#4b4f5b;font-weight:normal;white-space:nowrap;">1</div>
<div id="t65" style="position:absolute;left:699.70px;transform-origin:0 50%;top:340.53px;font-size:9.9px;line-height:9.9px;color:#2f3341;font-weight:bold;white-space:nowrap;transform:scaleX(0.8115);">In Shop Vehicles</div>
<div id="t66" style="position:absolute;left:1041.00px;transform-origin:0 50%;top:341.73px;font-size:9.1px;line-height:9.1px;color:#4b4f5b;font-weight:normal;white-space:nowrap;">0</div>
<div id="t67" style="position:absolute;left:699.70px;transform-origin:0 50%;top:367.33px;font-size:9.9px;line-height:9.9px;color:#2f3341;font-weight:bold;white-space:nowrap;transform:scaleX(0.8134);">Out Of Service Vehicles</div>
<div id="t68" style="position:absolute;left:1041.00px;transform-origin:0 50%;top:368.53px;font-size:9.1px;line-height:9.1px;color:#4b4f5b;font-weight:normal;white-space:nowrap;">1</div>
<div id="t69" style="position:absolute;left:1150.00px;transform-origin:0 50%;top:215.07px;font-size:11.6px;line-height:11.6px;color:#474b5b;font-weight:normal;white-space:nowrap;transform:scaleX(0.9390);">Vehicle Issue</div>
<div style="position:absolute;left:1150px;top:252.4px;width:401px;height:1px;background:#e9ebf0"></div>
<div style="position:absolute;left:1150px;top:279.1px;width:401px;height:1px;background:#e9ebf0"></div>
<div style="position:absolute;left:1150px;top:305.9px;width:401px;height:1px;background:#e9ebf0"></div>
<div style="position:absolute;left:1150px;top:332.5px;width:401px;height:1px;background:#e9ebf0"></div>
<div id="t70" style="position:absolute;left:1156.60px;transform-origin:0 50%;top:259.93px;font-size:9.9px;line-height:9.9px;color:#2f3341;font-weight:bold;white-space:nowrap;transform:scaleX(0.8251);">Vehicle Issue</div>
<div id="t71" style="position:absolute;left:1483.00px;transform-origin:0 50%;top:261.13px;font-size:9.1px;line-height:9.1px;color:#4b4f5b;font-weight:normal;white-space:nowrap;">5</div>
<div id="t72" style="position:absolute;left:1156.60px;transform-origin:0 50%;top:287.43px;font-size:9.9px;line-height:9.9px;color:#2f3341;font-weight:bold;white-space:nowrap;transform:scaleX(0.8184);">Opened Vehicle</div>
<div id="t73" style="position:absolute;left:1483.00px;transform-origin:0 50%;top:288.63px;font-size:9.1px;line-height:9.1px;color:#4b4f5b;font-weight:normal;white-space:nowrap;">4</div>
<div id="t74" style="position:absolute;left:1156.60px;transform-origin:0 50%;top:313.83px;font-size:9.9px;line-height:9.9px;color:#2f3341;font-weight:bold;white-space:nowrap;transform:scaleX(0.8249);">Closed Vehicle</div>
<div id="t75" style="position:absolute;left:1483.00px;transform-origin:0 50%;top:315.03px;font-size:9.1px;line-height:9.1px;color:#4b4f5b;font-weight:normal;white-space:nowrap;">0</div>
<div id="t76" style="position:absolute;left:1156.60px;transform-origin:0 50%;top:340.53px;font-size:9.9px;line-height:9.9px;color:#2f3341;font-weight:bold;white-space:nowrap;transform:scaleX(0.8166);">Resolved Vehicle</div>
<div id="t77" style="position:absolute;left:1483.00px;transform-origin:0 50%;top:341.73px;font-size:9.1px;line-height:9.1px;color:#4b4f5b;font-weight:normal;white-space:nowrap;">1</div>
<div id="t78" style="position:absolute;left:236.20px;transform-origin:0 50%;top:448.17px;font-size:11.6px;line-height:11.6px;color:#474b5b;font-weight:normal;white-space:nowrap;transform:scaleX(0.9384);">Equipments</div>
<div style="position:absolute;left:236px;top:485.3px;width:402px;height:1px;background:#e9ebf0"></div>
<div style="position:absolute;left:236px;top:512.3px;width:402px;height:1px;background:#e9ebf0"></div>
<div style="position:absolute;left:236px;top:539.3px;width:402px;height:1px;background:#e9ebf0"></div>
<div style="position:absolute;left:236px;top:565.9px;width:402px;height:1px;background:#e9ebf0"></div>
<div style="position:absolute;left:236px;top:592.5px;width:402px;height:1px;background:#e9ebf0"></div>
<div id="t79" style="position:absolute;left:242.80px;transform-origin:0 50%;top:493.13px;font-size:9.9px;line-height:9.9px;color:#2f3341;font-weight:bold;white-space:nowrap;transform:scaleX(0.8269);">Total Equipments</div>
<div id="t80" style="position:absolute;left:590.30px;transform-origin:0 50%;top:494.33px;font-size:9.1px;line-height:9.1px;color:#4b4f5b;font-weight:normal;white-space:nowrap;">7</div>
<div id="t81" style="position:absolute;left:242.80px;transform-origin:0 50%;top:519.73px;font-size:9.9px;line-height:9.9px;color:#2f3341;font-weight:bold;white-space:nowrap;transform:scaleX(0.8091);">In-Serve Equipments</div>
<div id="t82" style="position:absolute;left:590.30px;transform-origin:0 50%;top:520.93px;font-size:9.1px;line-height:9.1px;color:#4b4f5b;font-weight:normal;white-space:nowrap;">5</div>
<div id="t83" style="position:absolute;left:242.80px;transform-origin:0 50%;top:547.23px;font-size:9.9px;line-height:9.9px;color:#2f3341;font-weight:bold;white-space:nowrap;transform:scaleX(0.8147);">Disposed Equipments</div>
<div id="t84" style="position:absolute;left:590.30px;transform-origin:0 50%;top:548.43px;font-size:9.1px;line-height:9.1px;color:#4b4f5b;font-weight:normal;white-space:nowrap;">0</div>
<div id="t85" style="position:absolute;left:242.80px;transform-origin:0 50%;top:573.83px;font-size:9.9px;line-height:9.9px;color:#2f3341;font-weight:bold;white-space:nowrap;transform:scaleX(0.8194);">Missing Equipments</div>
<div id="t86" style="position:absolute;left:590.30px;transform-origin:0 50%;top:575.03px;font-size:9.1px;line-height:9.1px;color:#4b4f5b;font-weight:normal;white-space:nowrap;">0</div>
<div id="t87" style="position:absolute;left:242.80px;transform-origin:0 50%;top:600.43px;font-size:9.9px;line-height:9.9px;color:#2f3341;font-weight:bold;white-space:nowrap;transform:scaleX(0.8033);">Out-Of-Service Equipments</div>
<div id="t88" style="position:absolute;left:590.30px;transform-origin:0 50%;top:601.63px;font-size:9.1px;line-height:9.1px;color:#4b4f5b;font-weight:normal;white-space:nowrap;">2</div>
<svg style="position:absolute;left:619.5px;top:218px" width="18.5" height="9.5" viewBox="0 0 18.5 9.5" fill="none" stroke="#0d1ca6" stroke-width="1.5" stroke-linecap="round"><circle cx="9.25" cy="2" r="1.4"/><path d="M6 8.6C6 5.6 12.5 5.6 12.5 8.6Z"/><circle cx="2.8" cy="3.6" r="1.25" fill="#0d1ca6" stroke="none"/><circle cx="15.7" cy="3.6" r="1.25" fill="#0d1ca6" stroke="none"/><path d="M0.9 8.6C1 7.1 2 6.4 3.6 6.6M17.6 8.6C17.5 7.1 16.5 6.4 14.9 6.6"/></svg>
<svg style="position:absolute;left:1077.5px;top:216.5px" width="16.5" height="12.5" viewBox="0 0 16.5 12.5"><path d="M1.3 1.2H9.6V8.6H1.3Z" stroke="#0d1ca6" stroke-width="1.6" fill="none" stroke-linejoin="round"/><path d="M9 3.2H12.6L15.6 6.4V9.3H9Z" fill="#0d1ca6"/><path d="M10.6 4.6H12L13.5 6.3H10.6Z" fill="#fcfcfd"/><circle cx="3.8" cy="9.9" r="1.7" fill="#fcfcfd" stroke="#0d1ca6" stroke-width="1.5"/><circle cx="12.3" cy="9.9" r="1.7" fill="#fcfcfd" stroke="#0d1ca6" stroke-width="1.5"/></svg>
<svg style="position:absolute;left:1535px;top:215px" width="15" height="15" viewBox="0 0 15 15"><path d="M3 12L12 3" stroke="#0d1ca6" stroke-width="1.8"/><path d="M8 1H14V7Z" fill="#0d1ca6"/><path d="M1 8V14H7Z" fill="#0d1ca6"/></svg>
<svg style="position:absolute;left:621px;top:449px" width="16" height="14" viewBox="0 0 16 14" fill="none" stroke="#0d1ca6" stroke-width="1.5"><rect x="1" y="4" width="14" height="9" rx="1"/><path d="M5.5 4V2.2C5.5 1.5 6 1.2 6.5 1.2H9.5C10 1.2 10.5 1.5 10.5 2.2V4M1 8.3H15M5.2 7.5V9.2M10.8 7.5V9.2"/></svg>
<div id="t89" style="position:absolute;left:693.50px;transform-origin:0 50%;top:446.97px;font-size:11.6px;line-height:11.6px;color:#474b5b;font-weight:normal;white-space:nowrap;transform:scaleX(0.9246);">Vehicle Monthly Expenses Cost</div>
<div style="position:absolute;left:725px;top:496.0px;width:363px;height:1px;background:#e6e7ea"></div>
<div id="t90" style="position:absolute;right:877.80px;transform-origin:100% 50%;top:490.08px;font-size:8.6px;line-height:8.6px;color:#4453b8;font-weight:normal;white-space:nowrap;transform:scaleX(0.9160);">5.0</div>
<div style="position:absolute;left:725px;top:533.0px;width:363px;height:1px;background:#e6e7ea"></div>
<div id="t91" style="position:absolute;right:877.80px;transform-origin:100% 50%;top:527.08px;font-size:8.6px;line-height:8.6px;color:#4453b8;font-weight:normal;white-space:nowrap;transform:scaleX(0.9160);">4.0</div>
<div style="position:absolute;left:725px;top:570.5px;width:363px;height:1px;background:#e6e7ea"></div>
<div id="t92" style="position:absolute;right:877.80px;transform-origin:100% 50%;top:564.58px;font-size:8.6px;line-height:8.6px;color:#4453b8;font-weight:normal;white-space:nowrap;transform:scaleX(0.9160);">3.0</div>
<div style="position:absolute;left:725px;top:607.4px;width:363px;height:1px;background:#e6e7ea"></div>
<div id="t93" style="position:absolute;right:877.80px;transform-origin:100% 50%;top:601.48px;font-size:8.6px;line-height:8.6px;color:#4453b8;font-weight:normal;white-space:nowrap;transform:scaleX(0.9160);">2.0</div>
<div style="position:absolute;left:725px;top:644.9px;width:363px;height:1px;background:#e6e7ea"></div>
<div id="t94" style="position:absolute;right:877.80px;transform-origin:100% 50%;top:638.98px;font-size:8.6px;line-height:8.6px;color:#4453b8;font-weight:normal;white-space:nowrap;transform:scaleX(0.9160);">1.0</div>
<div style="position:absolute;left:725px;top:681.9px;width:363px;height:1px;background:#e6e7ea"></div>
<div id="t95" style="position:absolute;right:877.80px;transform-origin:100% 50%;top:675.98px;font-size:8.6px;line-height:8.6px;color:#4453b8;font-weight:normal;white-space:nowrap;transform:scaleX(0.9160);">0.0</div>
<div style="position:absolute;left:729px;top:494.5px;width:1.3px;height:189px;background:#4d5cc8"></div>
<div style="position:absolute;left:702px;top:588px;width:0;height:0"><div style="position:absolute;left:-40px;top:-5px;width:80px;height:10px;text-align:center;font-size:7.6px;line-height:10px;font-weight:bold;color:#1424a6;transform:rotate(-90deg);white-space:nowrap">Expenses Cost</div></div>
<div id="t96" style="position:absolute;left:1149.90px;transform-origin:0 50%;top:446.97px;font-size:11.6px;line-height:11.6px;color:#474b5b;font-weight:normal;white-space:nowrap;transform:scaleX(0.9179);">Vehicle Expenses Type</div>
<svg style="position:absolute;left:1533px;top:481px" width="12" height="8" viewBox="0 0 12 8"><path d="M0 1H12M0 4H12M0 7H12" stroke="#6e7079" stroke-width="1.2"/></svg>
<div style="position:absolute;left:1243px;top:496.8px;width:302px;height:1px;background:#ebecef"></div>
<div style="position:absolute;left:1243px;top:516.4px;width:302px;height:1px;background:#ebecef"></div>
<div style="position:absolute;left:1243px;top:536.8px;width:302px;height:1px;background:#ebecef"></div>
<div style="position:absolute;left:1243px;top:557.2px;width:302px;height:1px;background:#ebecef"></div>
<div style="position:absolute;left:1243px;top:577.1px;width:302px;height:1px;background:#ebecef"></div>
<div style="position:absolute;left:1243px;top:597.0px;width:302px;height:1px;background:#ebecef"></div>
<div style="position:absolute;left:1243px;top:617.0px;width:302px;height:1px;background:#ebecef"></div>
<div style="position:absolute;left:1243px;top:637.0px;width:302px;height:1px;background:#ebecef"></div>
<div style="position:absolute;left:1243px;top:657.3px;width:302px;height:1px;background:#ebecef"></div>
<div style="position:absolute;left:1243px;top:677.7px;width:302px;height:1px;background:#ebecef"></div>
<div style="position:absolute;left:1243px;top:697.6px;width:302px;height:1px;background:#ebecef"></div>
<div style="position:absolute;left:1243px;top:497px;width:1px;height:201px;background:#ebecef"></div>
<div style="position:absolute;left:1244px;top:499.8px;width:301px;height:13.7px;background:#279cf5"></div>
<div id="t97" style="position:absolute;left:1294.50px;width:200px;text-align:center;top:503.48px;font-size:7.2px;line-height:7.2px;color:#ffffff;font-weight:bold;white-space:nowrap;">2</div>
<div style="position:absolute;left:1244px;top:519.8px;width:151px;height:13.7px;background:#279cf5"></div>
<div id="t98" style="position:absolute;left:1219.50px;width:200px;text-align:center;top:523.48px;font-size:7.2px;line-height:7.2px;color:#ffffff;font-weight:bold;white-space:nowrap;">1</div>
<div style="position:absolute;left:1244px;top:540.1px;width:151px;height:13.7px;background:#279cf5"></div>
<div id="t99" style="position:absolute;left:1219.50px;width:200px;text-align:center;top:543.78px;font-size:7.2px;line-height:7.2px;color:#ffffff;font-weight:bold;white-space:nowrap;">1</div>
<div style="position:absolute;left:1244px;top:560.1px;width:301px;height:13.7px;background:#279cf5"></div>
<div id="t100" style="position:absolute;left:1294.50px;width:200px;text-align:center;top:563.78px;font-size:7.2px;line-height:7.2px;color:#ffffff;font-weight:bold;white-space:nowrap;">2</div>
<div id="t101" style="position:absolute;right:366.50px;transform-origin:100% 50%;top:501.78px;font-size:7.6px;line-height:7.6px;color:#3f4350;font-weight:normal;white-space:nowrap;transform:scaleX(1.0882);">Oil Change</div>
<div id="t102" style="position:absolute;right:366.50px;transform-origin:100% 50%;top:521.28px;font-size:7.6px;line-height:7.6px;color:#3f4350;font-weight:normal;white-space:nowrap;transform:scaleX(1.0525);">Gas And Fuel</div>
<div id="t103" style="position:absolute;right:366.50px;transform-origin:100% 50%;top:542.08px;font-size:7.6px;line-height:7.6px;color:#3f4350;font-weight:normal;white-space:nowrap;transform:scaleX(1.0887);">Repairs And Maintan</div>
<div id="t104" style="position:absolute;right:366.50px;transform-origin:100% 50%;top:562.48px;font-size:7.6px;line-height:7.6px;color:#3f4350;font-weight:normal;white-space:nowrap;transform:scaleX(1.0629);">Tires</div>
<div id="t105" style="position:absolute;right:366.50px;transform-origin:100% 50%;top:582.38px;font-size:7.6px;line-height:7.6px;color:#3f4350;font-weight:normal;white-space:nowrap;transform:scaleX(1.1050);">Insurance</div>
<div id="t106" style="position:absolute;right:366.50px;transform-origin:100% 50%;top:602.38px;font-size:7.6px;line-height:7.6px;color:#3f4350;font-weight:normal;white-space:nowrap;transform:scaleX(1.0550);">Licenses</div>
<div id="t107" style="position:absolute;right:366.50px;transform-origin:100% 50%;top:622.28px;font-size:7.6px;line-height:7.6px;color:#3f4350;font-weight:normal;white-space:nowrap;transform:scaleX(1.0767);">Car Loan</div>
<div id="t108" style="position:absolute;right:366.50px;transform-origin:100% 50%;top:643.08px;font-size:7.6px;line-height:7.6px;color:#3f4350;font-weight:normal;white-space:nowrap;transform:scaleX(1.0451);">Car Lease</div>
<div id="t109" style="position:absolute;right:366.50px;transform-origin:100% 50%;top:662.98px;font-size:7.6px;line-height:7.6px;color:#3f4350;font-weight:normal;white-space:nowrap;transform:scaleX(1.0144);">Park Fees</div>
<div id="t110" style="position:absolute;right:366.50px;transform-origin:100% 50%;top:682.98px;font-size:7.6px;line-height:7.6px;color:#3f4350;font-weight:normal;white-space:nowrap;transform:scaleX(1.0957);">Tolls</div>
<div id="t111" style="position:absolute;left:1143.40px;width:200px;text-align:center;top:706.58px;font-size:8px;line-height:8px;color:#464b57;font-weight:normal;white-space:nowrap;">0.0</div>
<div id="t112" style="position:absolute;left:1244.40px;width:200px;text-align:center;top:706.58px;font-size:8px;line-height:8px;color:#464b57;font-weight:normal;white-space:nowrap;">0.7</div>
<div id="t113" style="position:absolute;left:1344.20px;width:200px;text-align:center;top:706.58px;font-size:8px;line-height:8px;color:#464b57;font-weight:normal;white-space:nowrap;">1.3</div>
<div id="t114" style="position:absolute;left:1444.80px;width:200px;text-align:center;top:706.58px;font-size:8px;line-height:8px;color:#464b57;font-weight:normal;white-space:nowrap;">2.0</div>
<div id="t115" style="position:absolute;left:236.60px;transform-origin:0 50%;top:787.67px;font-size:11.6px;line-height:11.6px;color:#474b5b;font-weight:normal;white-space:nowrap;transform:scaleX(0.9155);">Equipment Based On Status</div>
<div id="t116" style="position:absolute;left:692.60px;transform-origin:0 50%;top:787.67px;font-size:11.6px;line-height:11.6px;color:#474b5b;font-weight:normal;white-space:nowrap;transform:scaleX(0.9388);">Driver reported issues</div>
<div id="t117" style="position:absolute;left:1149.30px;transform-origin:0 50%;top:787.67px;font-size:11.6px;line-height:11.6px;color:#474b5b;font-weight:normal;white-space:nowrap;transform:scaleX(0.9325);">Vehicles Mileage By</div>
<div style="position:absolute;left:1588px;top:91px;width:12px;height:727px;background:#f1f1f1"></div>
<div style="position:absolute;left:1589px;top:103px;width:9px;height:330px;background:#c1c1c1"></div>
<svg style="position:absolute;left:1590px;top:94px" width="8" height="6" viewBox="0 0 8 6"><path d="M0.5 5L4 1L7.5 5Z" fill="#a3a3a3"/></svg>
<svg style="position:absolute;left:1590px;top:808px" width="8" height="6" viewBox="0 0 8 6"><path d="M0.5 1L4 5L7.5 1Z" fill="#505050"/></svg>
<div style="position:absolute;left:1562px;top:409.5px;width:25.5px;height:63px;background:#0519a8;border-radius:4px 0 0 4px"></div>
<div style="position:absolute;left:1577.3px;top:440.6px;width:0;height:0"><div style="position:absolute;left:-40px;top:-7px;width:80px;height:14px;text-align:center;font-size:11.3px;line-height:14px;color:#fff;transform:rotate(-90deg);white-space:nowrap">Feedback</div></div>
</body></html>
